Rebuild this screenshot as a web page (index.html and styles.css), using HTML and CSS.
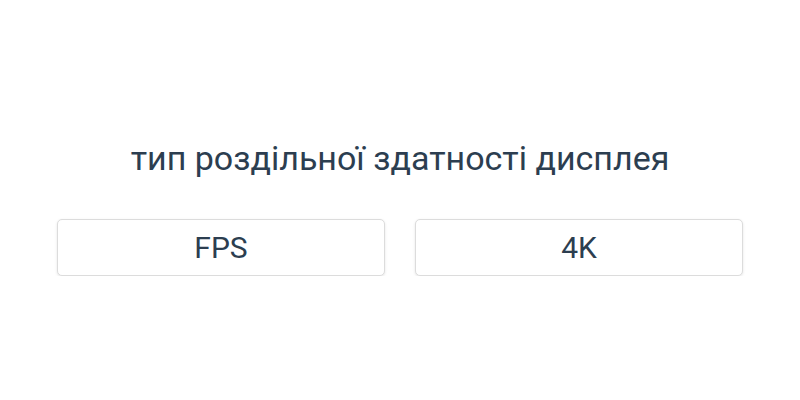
FILE: index.html
```html
<!DOCTYPE html>
<html>
<head>
<meta charset="utf-8">
<link rel="stylesheet" href="styles.css">
</head>
<body>
<main class="panel">
  <h1 class="title">тип роздільної здатності дисплея</h1>
  <div class="options">
    <button class="option">FPS</button>
    <button class="option">4K</button>
  </div>
</main>
</body>
</html>
```
FILE: styles.css
```css
html, body {
  margin: 0;
  padding: 0;
  background: #ffffff;
}
body {
  font-family: Roboto, "Noto Sans", sans-serif;
  color: #2c3e50;
}
.panel {
  width: 686px;
  margin: 0 auto;
  padding-top: 138px;
  display: flex;
  flex-direction: column;
}
.title {
  margin: 0;
  font-size: 34px;
  font-weight: 400;
  line-height: 40px;
  text-align: center;
  color: #2c3e50;
}
.options {
  margin-top: 41px;
  display: grid;
  grid-template-columns: 1fr 1fr;
  gap: 30px;
}
.option {
  height: 57px;
  font-family: Roboto, "Noto Sans", sans-serif;
  font-size: 30px;
  color: #2c3e50;
  background: #ffffff;
  border: 1px solid #dcdcdc;
  border-radius: 5px;
  box-shadow: 0 1px 3px rgba(0,0,0,0.1);
  padding: 0;
}
```
